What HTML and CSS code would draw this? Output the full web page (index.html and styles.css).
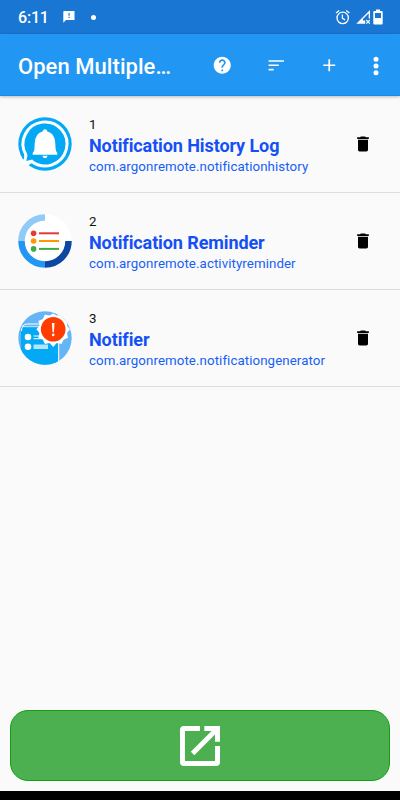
FILE: index.html
```html
<!DOCTYPE html>
<html lang="en">
<head>
    <meta charset="UTF-8">
    <meta name="viewport" content="width=device-width, initial-scale=1.0">
    <title>Open Multiple Apps</title>
    <link rel="stylesheet" href="styles.css">
</head>
<body>
    <div class="screen">
        <div class="status-bar">
            <span class="clock">6:11</span>
            <svg class="status-message" viewBox="0 0 12 12"><path fill="#fff" fill-rule="evenodd" d="M1 0h10.500v9H3L.3 11.700V.7zM5.500 2v2.800h1.200V2zM5.500 5.800V7h1.200V5.800z"/></svg>
            <span class="status-dot"></span>
            <svg class="status-icons" viewBox="0 0 48 16">
                <g fill="none" stroke="#fff" stroke-width="1.300">
                    <circle cx="7.700" cy="8.900" r="5.700"/>
                    <path d="M7.400 5.500v3.700l2.600 1.700M1 4l3.200-2.600M14.400 4l-3.200-2.600"/>
                </g>
                <path fill="#fff" d="M21.300 14.700 35 1v8.500h-1.300V4.200L28 9.900v1.700h2.200v3.100z"/>
                <path stroke="#fff" stroke-width="1.200" d="M31.300 11l3.500 3.700m0-3.700-3.500 3.700"/>
                <path fill="#fff" fill-rule="evenodd" d="M41 .5h4V2h1.800q.9 0 .9.900v11.700q0 .9-.9.900h-7.600q-.9 0-.9-.9V2.900q0-.9.900-.9H41zM40 4v5h6V4z"/>
            </svg>
        </div>

        <div class="app-bar">
            <h1>Open Multiple…</h1>
            <button class="action" aria-label="Help">
                <svg viewBox="0 0 24 24"><path d="M12 2C6.480 2 2 6.480 2 12s4.480 10 10 10 10-4.480 10-10S17.520 2 12 2zm1 17h-2v-2h2v2zm2.070-7.750-.9.920C13.450 12.900 13 13.500 13 15h-2v-.5c0-1.100.45-2.100 1.170-2.830l1.240-1.260c.37-.36.59-.86.59-1.410 0-1.100-.9-2-2-2s-2 .9-2 2H8c0-2.210 1.790-4 4-4s4 1.790 4 4c0 .88-.36 1.680-.93 2.250z"/></svg>
            </button>
            <button class="action" aria-label="Sort">
                <svg viewBox="0 0 24 24"><path d="M3 18h6v-2H3v2zM3 6v2h18V6H3zm0 7h12v-2H3v2z"/></svg>
            </button>
            <button class="action" aria-label="Add">
                <svg viewBox="0 0 24 24"><path d="M19 13h-6v6h-2v-6H5v-2h6V5h2v6h6v2z"/></svg>
            </button>
            <button class="action more" aria-label="More">
                <svg viewBox="0 0 6 20"><circle cx="3" cy="3.200" r="2.500"/><circle cx="3" cy="10" r="2.500"/><circle cx="3" cy="16.700" r="2.500"/></svg>
            </button>
        </div>

        <div class="app-list">
            <div class="app-row">
                <svg class="app-icon" viewBox="0 0 54 54">
                    <circle cx="27" cy="27" r="26.700" fill="#03a9f4"/>
                    <path fill="none" stroke="#fff" stroke-width="3" d="M13.500 44.300A22 22 0 1 0 8 38"/>
                    <path fill="#fff" d="M6.500 36.500 9.500 38 8.300 44l6-1.500 1.500 2.500-5 3-1.500 2-6-6.500L6 42z"/>
                    <path fill="#fff" d="M27 12.200q1.800 0 2.500 2.400Q37 16.500 37.300 26.500L37.600 32q.2 2.400 1.700 4v1.700H14.700V36q1.500-1.600 1.700-4l.3-5.500q.3-10 7.800-11.900.7-2.400 2.500-2.400zM24.400 38.800h5.200q-.7 2.500-2.600 2.500t-2.600-2.500z"/>
                </svg>
                <div class="app-info">
                    <div class="number">1</div>
                    <div class="name">Notification History Log</div>
                    <div class="package">com.argonremote.notificationhistory</div>
                </div>
                <button class="delete" aria-label="Delete">
                    <svg viewBox="0 0 24 24"><path d="M6 19c0 1.100.9 2 2 2h8c1.100 0 2-.9 2-2V7H6v12zM19 4h-3.500l-1-1h-5l-1 1H5v2h14V4z"/></svg>
                </button>
            </div>

            <div class="app-row">
                <svg class="app-icon" viewBox="0 0 54 54">
                    <circle cx="27" cy="27" r="26.700" fill="#fff"/>
                    <g fill="none" stroke-width="6.500">
                        <path stroke="#90caf9" d="M3.500 27A23.500 23.500 0 0 1 27 3.500"/>
                        <path stroke="#2196f3" d="M27 50.500A23.500 23.500 0 0 1 3.500 27"/>
                        <path stroke="#0d47a1" d="M50.500 27A23.500 23.500 0 0 1 27 50.500"/>
                    </g>
                    <g fill="#e53935"><circle cx="15.600" cy="19.300" r="2.800"/><path d="M21 18.300h20v2H21z"/></g>
                    <g fill="#ff9800"><circle cx="15.600" cy="27" r="2.800"/><path d="M21 26h20v2H21z"/></g>
                    <g fill="#43a84a"><circle cx="15.600" cy="34.900" r="2.800"/><path d="M21 33.900h20v2H21z"/></g>
                </svg>
                <div class="app-info">
                    <div class="number">2</div>
                    <div class="name">Notification Reminder</div>
                    <div class="package">com.argonremote.activityreminder</div>
                </div>
                <button class="delete" aria-label="Delete">
                    <svg viewBox="0 0 24 24"><path d="M6 19c0 1.100.9 2 2 2h8c1.100 0 2-.9 2-2V7H6v12zM19 4h-3.500l-1-1h-5l-1 1H5v2h14V4z"/></svg>
                </button>
            </div>

            <div class="app-row">
                <svg class="app-icon" viewBox="0 0 54 54">
                    <defs><clipPath id="disc"><circle cx="27" cy="27" r="26.700"/></clipPath></defs>
                    <g clip-path="url(#disc)">
                        <path fill="#64b5f6" d="M0 0h54v54H0z"/>
                        <path fill="#03a9f4" d="M3 16h37v38H3z"/>
                        <path fill="none" stroke="#fff" stroke-width="1" d="M3.500 20q0-7 6-7H24M40.700 32v22"/>
                        <path stroke="#fff" stroke-width=".7" d="M4 15.700h18"/>
                        <g fill="#fff"><circle cx="10" cy="26" r="3.300"/><circle cx="10" cy="35.700" r="3.300"/></g>
                        <path stroke="#fff" stroke-width="1" d="M15.500 25H22M15.500 27.700h8"/>
                        <path fill="#b3e5fc" d="M15.500 33.500H30v4.500H15.500z"/>
                        <path fill="#fff" d="M35.200 2.500l3.600 2.100 4.700-1 2 4.500 4.500 1.800-1 4.900 3 3.500-3 3.800 1 4.700-4.500 2-2 4.300-4.700-1-3.600 3.900-3.600-3.900-4.700 1-2-4.300-4.500-2 1-4.700-3-3.800 3-3.500-1-4.900 4.500-1.800 2-4.500 4.700 1z"/>
                        <circle cx="35.200" cy="18.300" r="12.300" fill="#ff3d00"/>
                        <path fill="#fff" d="M33.900 12h2.600l-.6 9.200h-1.400z"/>
                        <circle cx="35.200" cy="23.900" r="1.300" fill="#fff"/>
                    </g>
                </svg>
                <div class="app-info">
                    <div class="number">3</div>
                    <div class="name">Notifier</div>
                    <div class="package">com.argonremote.notificationgenerator</div>
                </div>
                <button class="delete" aria-label="Delete">
                    <svg viewBox="0 0 24 24"><path d="M6 19c0 1.100.9 2 2 2h8c1.100 0 2-.9 2-2V7H6v12zM19 4h-3.500l-1-1h-5l-1 1H5v2h14V4z"/></svg>
                </button>
            </div>
        </div>

        <button class="open-button" aria-label="Open all">
            <svg viewBox="0 0 40 40"><path d="M20 0v5H5v30h30V20h5v16q0 4-4 4H4q-4 0-4-4V4q0-4 4-4zM24.300 0H40v15.700h-5V8.500L14.300 29.300l-3.500-3.500L31.500 5h-7.200z"/></svg>
        </button>
        <div class="nav-bar"></div>
    </div>
</body>
</html>
```

FILE: styles.css
```css
body {
    margin: 0;
    font-family: Roboto, sans-serif;
    background: #fafafa;
}
button {
    display: flex;
    align-items: center;
    justify-content: center;
    border: none;
    padding: 0;
    background: none;
}
svg {
    display: block;
}
.screen {
    width: 400px;
    height: 800px;
    display: flex;
    flex-direction: column;
    overflow: hidden;
}
.status-bar {
    height: 34px;
    box-sizing: border-box;
    padding: 0 17px 0 18px;
    display: flex;
    align-items: center;
    background: #1976d2;
    color: #fff;
}
.clock {
    width: 44.500px;
    font-size: 16px;
    font-weight: 500;
    letter-spacing: -0.2px;
}
.status-message {
    width: 12px;
    height: 12px;
}
.status-dot {
    width: 5px;
    height: 5px;
    margin-left: 16px;
    border-radius: 50%;
    background: #fff;
}
.status-icons {
    width: 48px;
    height: 16px;
    margin-left: auto;
}
.app-bar {
    height: 62px;
    box-sizing: border-box;
    padding: 2px 0 0 18px;
    display: flex;
    align-items: center;
    background: #2196f3;
    border-bottom: 1px solid #1e88e5;
    box-shadow: 0 1px 3px rgba(0, 0, 0, 0.25);
    z-index: 1;
}
.app-bar h1 {
    width: 177.500px;
    margin: 2px 0 0;
    font-size: 22px;
    line-height: 28px;
    font-weight: 500;
    letter-spacing: 0.05px;
    color: #fff;
    white-space: nowrap;
}
.action {
    width: 53.500px;
    height: 53px;
    fill: #fff;
}
.action svg {
    width: 20.500px;
    height: 20.500px;
}
.more {
    width: 40px;
}
.more svg {
    width: 6px;
    height: 20px;
}
.app-list {
    flex: 1;
}
.app-row {
    height: 97px;
    box-sizing: border-box;
    padding: 0 27px 0 17.500px;
    display: flex;
    align-items: center;
    border-bottom: 1px solid #dedede;
}
.app-icon {
    width: 54px;
    height: 54px;
    margin-right: 17.500px;
}
.app-info {
    flex: 1;
    padding-top: 5px;
    white-space: nowrap;
}
.number {
    font-size: 13.300px;
    line-height: 16px;
    color: #111;
}
.name {
    font-size: 18px;
    line-height: 25px;
    font-weight: 700;
    letter-spacing: -0.1px;
    color: #1450f5;
}
.package {
    font-size: 13.300px;
    line-height: 18px;
    letter-spacing: 0.080px;
    color: #1660f8;
}
.delete svg {
    width: 20px;
    height: 20px;
}
.open-button {
    height: 71px;
    margin: 0 10px 10px;
    box-sizing: border-box;
    border: 1px solid #12a012;
    border-radius: 18px;
    background: #4caf50;
    fill: #fff;
}
.open-button svg {
    width: 40px;
    height: 40px;
}
.nav-bar {
    height: 9px;
    background: #000;
}
```
